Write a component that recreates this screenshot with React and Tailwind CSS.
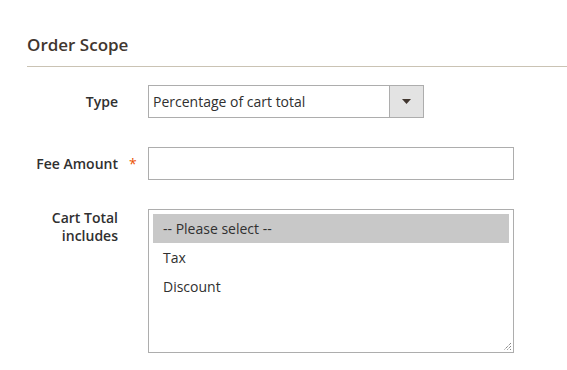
import React from "react";

const font = { fontFamily: '"Open Sans", "Liberation Sans", sans-serif' };

function Label({ children, required = false, top = false }) {
  return (
    <div
      className={`relative w-[91px] shrink-0 mr-[30px] text-right text-[14px] font-semibold text-[#303030] ${
        top ? "leading-[18px]" : "leading-[33px]"
      }`}
    >
      {children}
      {required && (
        <span className="absolute left-[102px] top-0 text-[#eb5202] font-normal text-[14px]">*</span>
      )}
    </div>
  );
}

function ResizeGrip() {
  return (
    <svg className="absolute right-[1px] bottom-[1px]" width="10" height="10" viewBox="0 0 10 10">
      <path d="M9 2 L2 9 M9 5 L5 9 M9 8 L8 9" stroke="#555" strokeWidth="1" strokeDasharray="1 1" fill="none" />
    </svg>
  );
}

export default function App() {
  const options = ["-- Please select --", "Tax", "Discount"];

  return (
    <div className="w-[567px] h-[370px] bg-white overflow-hidden pl-[27px]" style={font}>
      <div className="mt-[35px] pb-[11px] border-b border-[#cac3b4]">
        <h2 className="text-[17px] leading-[20px] font-semibold text-[#41362f]">Order Scope</h2>
      </div>

      <div className="mt-[18px] flex flex-col gap-[29px]">
        {/* Type */}
        <div className="flex items-center">
          <Label>Type</Label>
          <div className="flex w-[276px] h-[33px] border border-[#adadad] bg-white">
            <div className="flex-1 pl-[4px] text-[14px] leading-[31px] text-[#303030] whitespace-nowrap">
              Percentage of cart total
            </div>
            <div className="w-[34px] border-l border-[#adadad] bg-[#e3e3e3] flex items-center justify-center">
              <svg width="9" height="5" viewBox="0 0 9 5">
                <path d="M0 0 H9 L4.5 5 Z" fill="#41362f" />
              </svg>
            </div>
          </div>
        </div>

        {/* Fee Amount */}
        <div className="flex items-center">
          <Label required>Fee Amount</Label>
          <div className="w-[366px] h-[33px] border border-[#adadad] bg-white" />
        </div>

        {/* Cart Total includes */}
        <div className="flex items-start">
          <Label top>
            Cart Total
            <br />
            includes
          </Label>
          <div className="relative w-[366px] h-[144px] border border-[#adadad] bg-white p-[4px]">
            {options.map((o, i) => (
              <div
                key={o}
                className={`h-[29px] pl-[10px] text-[14px] leading-[29px] text-[#303030] ${
                  i === 0 ? "bg-[#c8c8c8]" : ""
                }`}
              >
                {o}
              </div>
            ))}
            <ResizeGrip />
          </div>
        </div>
      </div>
    </div>
  );
}
